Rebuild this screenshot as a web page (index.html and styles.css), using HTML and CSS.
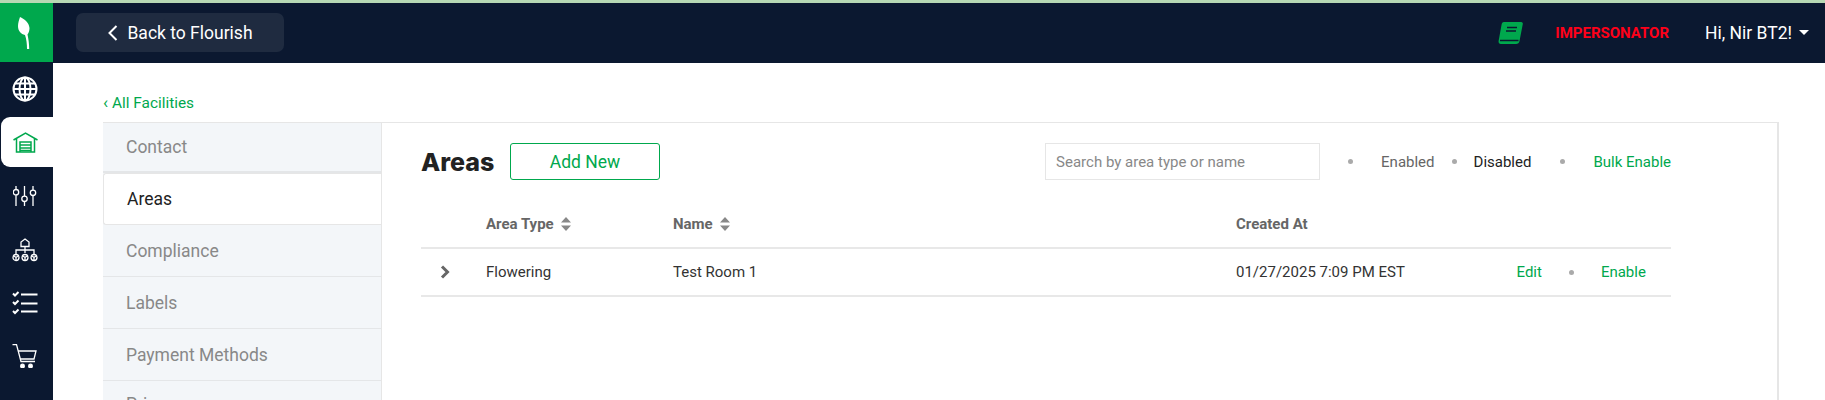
FILE: index.html
```html
<!DOCTYPE html>
<html lang="en">
<head>
<meta charset="utf-8">
<title>Areas</title>
<link rel="stylesheet" href="styles.css">
</head>
<body>
<div class="strip"></div>
<div class="app">
  <aside class="rail">
    <div class="logo">
      <svg width="16" height="35" viewBox="0 0 16 35"><path class="fill-w" d="M4 2C8 4 13 7 13.500 13C13.500 16 12.700 18 11.500 19.500C12.500 24 13.200 29 13.200 34L11 34C11 29 10.500 24 9 20C5 19 2 16 2 11C2 8 3 5 4 2Z"/></svg>
    </div>
    <div class="rail-item globe">
      <svg width="26" height="26" viewBox="0 0 26 26" class="st-w2"><circle cx="13" cy="13" r="11.500"/><ellipse cx="13" cy="13" rx="5.500" ry="11.500"/><path d="M13 1.500V24.500M1.500 13H24.500M3 7.500H23M3 18.500H23"/></svg>
    </div>
    <div class="rail-item active">
      <svg width="25" height="21" viewBox="0 0 25 21" class="st-g"><path d="M0.500 8L12.500 1L24.500 8"/><path d="M3.500 6.500V20H21.500V6.500"/><path d="M7 20V10H18V20M7 13H18M7 16H18M7 18.500H18"/></svg>
    </div>
    <div class="rail-item sliders">
      <svg width="24" height="20" viewBox="0 0 24 20" class="st-w"><path d="M3 0V3.500M3 9V20M11.500 0V10M11.500 15.500V20M20 0V4M20 9.500V20"/><circle cx="3" cy="6.200" r="2.700"/><circle cx="11.500" cy="12.800" r="2.700"/><circle cx="20" cy="6.800" r="2.700"/></svg>
    </div>
    <div class="rail-item tree">
      <svg width="26" height="24" viewBox="0 0 26 24" class="st-w"><path d="M13 1L17 4V8.500H9V4Z"/><path d="M13 8.500V15M4 16V12H22V16"/><circle cx="4" cy="19.500" r="3"/><circle cx="13" cy="19.500" r="3"/><circle cx="22" cy="19.500" r="3"/><path d="M2 18L4 19.500L6 18M4 19.500V22M11 18L13 19.500L15 18M13 19.500V22M20 18L22 19.500L24 18M22 19.500V22"/></svg>
    </div>
    <div class="rail-item checks">
      <svg width="26" height="24" viewBox="0 0 26 24" class="st-w2"><path d="M1 2.500L3 4.500L6.500 1M1 11L3 13L6.500 9.500M1 20L3 22L6.500 18.500"/><path d="M9 3.500H25.500M9 12.500H25.500M9 20.500H25.500"/></svg>
    </div>
    <div class="rail-item cart">
      <svg width="25" height="24" viewBox="0 0 25 24" class="st-w"><path d="M0.500 0.700H4.500L9 17.500H23"/><path d="M6 7H24L22 15L8 15"/><circle class="fill-w" cx="10.500" cy="22" r="1.800"/><circle class="fill-w" cx="18.500" cy="22" r="1.800"/></svg>
    </div>
  </aside>
  <div class="main">
    <header class="topbar">
      <a class="back">
        <svg width="11" height="18" viewBox="0 0 11 18" class="st-w2"><path d="M9.500 2L2.500 9L9.500 16"/></svg>
        <span>Back to Flourish</span>
      </a>
      <div class="top-right">
        <svg width="26" height="24" viewBox="0 0 26 24"><path class="fill-g" d="M6 1H23C24.500 1 25 2 24.800 3L21.500 20C21.200 22 20 23 18 23H3C1 23 0.300 21.500 0.600 20L3.500 4C3.800 2 4.500 1 6 1Z"/><path class="book-line" d="M9 6.500H19M8 10H18M2 19.500H20.500"/></svg>
        <span class="imp">IMPERSONATOR</span>
        <span class="hi">Hi, Nir BT2!</span>
        <span class="caret"></span>
      </div>
    </header>
    <div class="content">
      <a class="crumb"><span class="crumb-arrow">‹</span> All Facilities</a>
      <div class="panel">
        <nav class="tabs">
          <div class="tab first">Contact</div>
          <div class="tab current">Areas</div>
          <div class="tab">Compliance</div>
          <div class="tab">Labels</div>
          <div class="tab">Payment Methods</div>
          <div class="tab last">Prices</div>
        </nav>
        <section class="body">
          <div class="head">
            <h1 class="title">Areas</h1>
            <a class="add">Add New</a>
            <div class="tools">
              <input class="search" placeholder="Search by area type or name">
              <i class="dot d1"></i>
              <span class="muted">Enabled</span>
              <i class="dot d2"></i>
              <span class="dark">Disabled</span>
              <i class="dot d3"></i>
              <a class="link">Bulk Enable</a>
            </div>
          </div>
          <div class="row hdr">
            <span></span>
            <span class="sort">Area Type <svg width="10" height="14" viewBox="0 0 10 14"><path class="fill-s" d="M5 0L10 5.500H0ZM5 14L0 8.500H10Z"/></svg></span>
            <span class="sort">Name <svg width="10" height="14" viewBox="0 0 10 14"><path class="fill-s" d="M5 0L10 5.500H0ZM5 14L0 8.500H10Z"/></svg></span>
            <span>Created At</span>
            <span></span>
          </div>
          <div class="row item">
            <svg class="chev" width="10" height="14" viewBox="0 0 10 14"><path d="M2 1.500L7.500 7L2 12.500"/></svg>
            <span>Flowering</span>
            <span>Test Room 1</span>
            <span>01/27/2025 7:09 PM EST</span>
            <span class="actions"><a class="link">Edit</a><i class="dot"></i><a class="link">Enable</a></span>
          </div>
        </section>
      </div>
    </div>
  </div>
</div>
</body>
</html>
```
FILE: styles.css
```css
* { box-sizing: border-box; }
html, body { margin: 0; height: 400px; overflow: hidden; background: #fff; }
body { font-family: Roboto, "Liberation Sans", sans-serif; color: #333; }
.strip { height: 3px; background: #b7d8b4; }
.app { display: flex; height: 397px; }
.rail { width: 53px; flex: none; background: #0b1830; display: flex; flex-direction: column; align-items: stretch; }
.logo { height: 59px; background: #00a84d; display: flex; align-items: center; justify-content: center; padding-right: 6px; }
.rail-item { height: 52px; display: flex; align-items: center; justify-content: center; padding-right: 4px; }
.rail-item.globe { height: 55px; padding-bottom: 2px; }
.rail-item.active { background: #fff; height: 50px; margin-left: 1px; padding-right: 3px; border-radius: 9px 0 0 9px; }
.rail-item.sliders { height: 57px; }
.rail-item.checks { height: 54px; }
svg { display: block; fill: none; }
.fill-w { fill: #fff; }
.fill-g { fill: #00a84d; }
.fill-s { fill: #888; }
.st-w { stroke: #fff; stroke-width: 1.300; }
.st-w2 { stroke: #fff; stroke-width: 2; }
.st-g { stroke: #00a84d; stroke-width: 1.500; }
.book-line { stroke: #0b1830; stroke-width: 1.600; }
.main { flex: 1; min-width: 0; display: flex; flex-direction: column; }
.topbar { height: 60px; background: #0b1830; display: flex; align-items: center; justify-content: space-between; padding: 0 16px 1px 23px; flex: none; }
.back { width: 208px; height: 39px; background: #1f2b40; border-radius: 7px; color: #fff; font-size: 17.500px; display: flex; align-items: center; justify-content: center; gap: 9px; }
.top-right { display: flex; align-items: center; }
.imp { color: #ff0019; font-weight: 700; font-size: 15px; margin-left: 31px; }
.hi { color: #fff; font-size: 17.500px; margin-left: 36px; }
.caret { width: 0; height: 0; border: 5.500px solid transparent; border-top: 5.500px solid #fff; border-bottom: 0; margin-left: 7px; }
.content { padding: 30px 0 0 50px; flex: 1; min-height: 0; }
.crumb { display: block; color: #00a84d; font-size: 15.400px; line-height: 18px; height: 29px; }
.crumb-arrow { font-size: 17px; }
.panel { display: flex; height: 300px; width: 1676px; border-top: 1px solid #e6e6e6; border-right: 2px solid #e6e6e6; }
.tabs { width: 278px; flex: none; background: #f3f6f9; }
.tab { height: 52px; border-bottom: 1px solid #e4e6e8; padding-left: 23px; display: flex; align-items: center; color: #888; font-size: 17.500px; }
.tab.first { height: 50px; border-bottom-width: 2px; }
.tab.current { height: 52px; background: #fff; color: #222; border: 1px solid #e6e6e6; border-right: 0; border-radius: 3px 0 0 3px; }
.tab.last { padding-bottom: 5px; }
.body { flex: 1; min-width: 0; border-left: 1px solid #e6e6e6; padding: 20px 106px 0 39px; }
.head { display: flex; align-items: center; height: 37px; }
.title { margin: 0; font-family: Inter, Roboto, sans-serif; font-weight: 800; font-size: 25px; color: #222; width: 89px; }
.add { width: 150px; height: 37px; border: 1px solid #00a84d; border-radius: 3px; color: #00a84d; font-size: 17.500px; display: flex; align-items: center; justify-content: center; }
.tools { margin-left: auto; display: flex; align-items: center; font-size: 15px; }
.search { width: 275px; height: 37px; border: 1px solid #e6e6e6; padding: 0 10px; font: 15px Roboto, sans-serif; outline: 0; }
.search::placeholder { color: #888; }
.dot { width: 5px; height: 5px; border-radius: 50%; background: #aaa; flex: none; }
.d1 { margin: 0 28px; }
.d2 { margin: 0 17px; }
.d3 { margin: 0 28px 0 29px; }
.muted { color: #666; }
.dark { color: #222; }
.link { color: #00a84d; }
.row { display: grid; grid-template-columns: 65px 187px 563px 280.500px 1fr; align-items: center; border-bottom: 2px solid #e8e8e8; font-size: 15px; }
.hdr { height: 69px; padding-top: 20px; font-weight: 700; color: #666; }
.item { height: 48px; color: #333; }
.sort { display: flex; align-items: center; gap: 7px; }
.chev { margin-left: 19px; stroke: #666; stroke-width: 3; }
.actions { display: flex; align-items: center; }
.actions .dot { margin: 0 27px; }
```
